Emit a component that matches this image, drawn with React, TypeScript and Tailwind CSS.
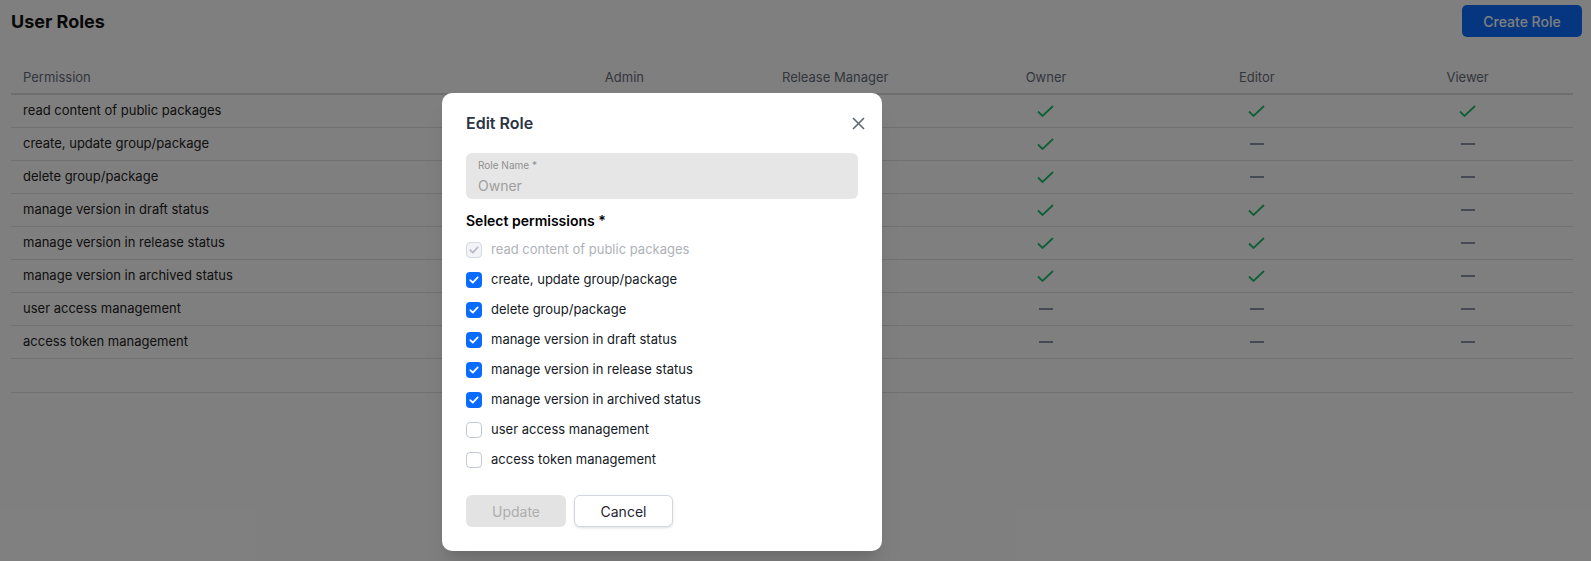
import React from "react";

type Cell = "yes" | "no" | "";

const columns = ["Admin", "Release Manager", "Owner", "Editor", "Viewer"];

const rows: { name: string; cells: Cell[] }[] = [
  { name: "read content of public packages", cells: ["", "", "yes", "yes", "yes"] },
  { name: "create, update group/package", cells: ["", "", "yes", "no", "no"] },
  { name: "delete group/package", cells: ["", "", "yes", "no", "no"] },
  { name: "manage version in draft status", cells: ["", "", "yes", "yes", "no"] },
  { name: "manage version in release status", cells: ["", "", "yes", "yes", "no"] },
  { name: "manage version in archived status", cells: ["", "", "yes", "yes", "no"] },
  { name: "user access management", cells: ["", "", "no", "no", "no"] },
  { name: "access token management", cells: ["", "", "no", "no", "no"] },
];

const permissions: { label: string; state: "disabled" | "on" | "off" }[] = [
  { label: "read content of public packages", state: "disabled" },
  { label: "create, update group/package", state: "on" },
  { label: "delete group/package", state: "on" },
  { label: "manage version in draft status", state: "on" },
  { label: "manage version in release status", state: "on" },
  { label: "manage version in archived status", state: "on" },
  { label: "user access management", state: "off" },
  { label: "access token management", state: "off" },
];

function Check() {
  return (
    <svg width="17" height="12" viewBox="0 0 17 12" fill="none">
      <path d="M1 6.5L5.5 11L16 1" stroke="#1fbf6c" strokeWidth="1.8" />
    </svg>
  );
}

function Dash() {
  return <div className="h-[2px] w-[14px] bg-[#8c95a8]" />;
}

function Box({ state }: { state: "disabled" | "on" | "off" }) {
  if (state === "off") {
    return <div className="h-4 w-4 rounded-[4px] border border-[#c2c9d4] bg-white" />;
  }
  const disabled = state === "disabled";
  return (
    <div
      className={
        disabled
          ? "flex h-4 w-4 items-center justify-center rounded-[4px] border border-[#d6dae1] bg-[#f1f3f6]"
          : "flex h-4 w-4 items-center justify-center rounded-[4px] bg-[#0a6cff]"
      }
    >
      <svg width="10" height="8" viewBox="0 0 10 8" fill="none">
        <path
          d="M1.3 4.2L3.8 6.6L8.7 1.4"
          stroke={disabled ? "#b5bcc7" : "#ffffff"}
          strokeWidth="1.7"
          strokeLinecap="round"
          strokeLinejoin="round"
        />
      </svg>
    </div>
  );
}

function EditRoleModal() {
  return (
    <div className="absolute left-[442px] top-[93px] w-[440px] rounded-[10px] bg-white px-6 pb-6 pt-[18px] shadow-xl">
      <div className="flex items-center justify-between">
        <h2 className="text-[16px] font-semibold text-[#2c3444]">Edit Role</h2>
        <button className="mr-[-12px] flex h-6 w-6 items-center justify-center text-[#5f6776]">
          <svg width="13" height="13" viewBox="0 0 13 13" fill="none">
            <path d="M1 1L12 12M12 1L1 12" stroke="currentColor" strokeWidth="1.6" />
          </svg>
        </button>
      </div>

      <div className="mt-[18px] h-[46px] rounded-[6px] bg-[#e6e6e6] px-3 pt-[5px]">
        <div className="text-[10px] leading-[14px] text-[#8f8f8f]">Role Name *</div>
        <div className="mt-[5px] text-[14px] leading-[18px] text-[#9e9e9e]">Owner</div>
      </div>

      <div className="mt-[12px] text-[14px] font-semibold leading-5 text-black">Select permissions *</div>

      <div className="mt-[4px] flex flex-col">
        {permissions.map((p) => (
          <label key={p.label} className="flex h-[30px] items-center gap-[9px]">
            <Box state={p.state} />
            <span
              className={
                p.state === "disabled"
                  ? "text-[13px] text-[#aeb2b8]"
                  : "text-[13px] text-[#141a26]"
              }
            >
              {p.label}
            </span>
          </label>
        ))}
      </div>

      <div className="mt-[20px] flex gap-2">
        <button className="h-8 w-[100px] rounded-[6px] bg-[#e3e3e3] text-[14px] text-[#adadad]">
          Update
        </button>
        <button className="h-8 w-[99px] rounded-[6px] border border-[#d3d8e0] bg-white text-[14px] text-[#1f2430] shadow-sm">
          Cancel
        </button>
      </div>
    </div>
  );
}

export default function App() {
  return (
    <div className="relative h-[561px] w-full overflow-hidden bg-white font-['Inter',sans-serif]">
      <div className="pl-[11px] pr-[9px]">
        <div className="flex h-[42px] items-center justify-between">
          <h1 className="text-[18px] font-bold text-[#111]">User Roles</h1>
          <button className="h-8 w-[120px] rounded-[5px] bg-[#0a6cff] text-[14px] font-medium text-white">
            Create Role
          </button>
        </div>

        <div className="mr-[9px] mt-[20px]">
          <div className="grid h-[33px] grid-cols-[508px_repeat(5,minmax(0,1fr))] items-center border-b-2 border-[#dcdcdc] text-[13px] text-[#666d7a]">
            <div className="pl-3">Permission</div>
            {columns.map((c) => (
              <div key={c} className="text-center">
                {c}
              </div>
            ))}
          </div>
          {rows.map((r) => (
            <div
              key={r.name}
              className="grid h-[33px] grid-cols-[508px_repeat(5,minmax(0,1fr))] items-center border-b border-[#e2e2e2] text-[13px] text-[#222]"
            >
              <div className="pl-3">{r.name}</div>
              {r.cells.map((c, i) => (
                <div key={i} className="flex justify-center">
                  {c === "yes" ? <Check /> : c === "no" ? <Dash /> : null}
                </div>
              ))}
            </div>
          ))}
          <div className="h-[34px] border-b border-[#e2e2e2]" />
        </div>
      </div>

      <div className="absolute inset-0 bg-black/50" />
      <EditRoleModal />
    </div>
  );
}
